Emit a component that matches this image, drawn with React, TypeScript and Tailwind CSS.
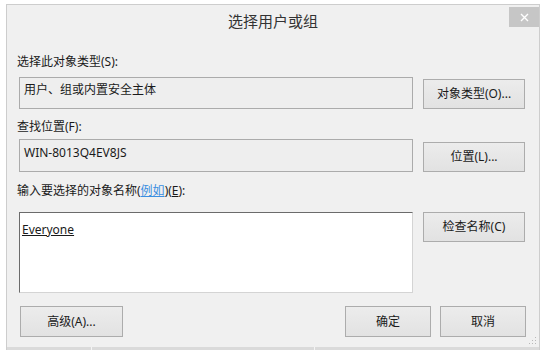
import React from "react";

const font = "font-['Noto_Sans','Noto_Sans_CJK_SC',sans-serif]";

function Btn({ children, w, h, cls = "" }: { children: React.ReactNode; w: string; h: string; cls?: string }) {
  return (
    <div
      className={`${w} ${h} ${cls} flex items-center justify-center border border-[#acacac] bg-gradient-to-b from-[#ececec] to-[#e2e2e2] text-[12px] leading-[16px] text-[#1a1a1a]`}
    >
      {children}
    </div>
  );
}

export default function App() {
  return (
    <div className={`w-[544px] h-[350px] bg-white pl-[6px] pt-[4px] overflow-hidden ${font}`}>
      <div className="relative w-[534px] h-[346px] border border-b-0 border-[#cdcdcd] bg-[#f0f0f0] flex flex-col">
        {/* Title bar */}
        <div className="relative h-[30px] flex items-center justify-center">
          <span className="text-[15px] leading-[20px] text-[#333] pt-[1px]">选择用户或组</span>
          <div className="absolute right-0 top-[2px] w-[30px] h-[20px] bg-[#c6c6c6] flex items-center justify-center">
            <svg width="9" height="9" viewBox="0 0 9 9">
              <path d="M1 1L8 8M8 1L1 8" stroke="#fff" strokeWidth="1.4" />
            </svg>
          </div>
        </div>

        {/* Row 1 */}
        <div className="mt-[19px] pl-[10px] text-[12px] leading-[16px] text-[#1a1a1a]">选择此对象类型(S):</div>
        <div className="mt-[7px] pl-[12px] flex gap-[10px] items-end">
          <div className="w-[394px] h-[32px] border border-[#ababab] bg-[#eeeeee] pl-[4px] pt-[4px] text-[12px] leading-[16px] text-[#1a1a1a]">
            用户、组或内置安全主体
          </div>
          <Btn w="w-[102px]" h="h-[30px]">对象类型(O)...</Btn>
        </div>

        {/* Row 2 */}
        <div className="mt-[10px] pl-[10px] text-[12px] leading-[16px] text-[#1a1a1a]">查找位置(F):</div>
        <div className="mt-[4px] pl-[12px] flex gap-[10px] items-end">
          <div className="w-[394px] h-[33px] border border-[#ababab] bg-[#eeeeee] pl-[4px] pt-[5px] text-[12px] leading-[16px] text-[#1a1a1a]">
            WIN-8013Q4EV8JS
          </div>
          <Btn w="w-[102px]" h="h-[30px]">位置(L)...</Btn>
        </div>

        {/* Row 3 */}
        <div className="mt-[11px] pl-[10px] text-[12px] leading-[16px] text-[#1a1a1a]">
          输入要选择的对象名称(<span className="text-[#3b8ee0] underline">例如</span>)(<span className="underline">E</span>):
        </div>
        <div className="mt-[13px] pl-[12px] flex gap-[10px] items-start">
          <div className="w-[394px] h-[81px] border border-[#d4d4d4] border-t-[#6b6b6b] border-l-[#6b6b6b] bg-white pl-[2px] pt-[9px] text-[12px] leading-[16px] text-[#1a1a1a]">
            <span className="underline">Everyone</span>
          </div>
          <Btn w="w-[102px]" h="h-[30px]">检查名称(C)</Btn>
        </div>

        {/* Bottom buttons */}
        <div className="mt-[13px] pl-[13px] flex items-start">
          <Btn w="w-[103px]" h="h-[31px]">高级(A)...</Btn>
          <div className="flex-1" />
          <div className="flex gap-[9px] pr-[13px]">
            <Btn w="w-[86px]" h="h-[31px]">确定</Btn>
            <Btn w="w-[86px]" h="h-[31px]">取消</Btn>
          </div>
        </div>

        <div className="flex-1" />
        <div className="h-[3px] bg-[#dadada] flex">
          <div className="w-[84px]" />
          <div className="w-[1px] bg-[#f4f4f4]" />
          <div className="w-[222px]" />
          <div className="w-[1px] bg-[#f4f4f4]" />
        </div>

        {/* Resize grip */}
        <svg className="absolute right-[2px] bottom-[5px]" width="9" height="9" viewBox="0 0 9 9">
          <rect x="7" y="1" width="1" height="1" fill="#b8b8b8" />
          <rect x="4" y="4" width="1" height="1" fill="#b8b8b8" />
          <rect x="7" y="4" width="1" height="1" fill="#b8b8b8" />
          <rect x="1" y="7" width="1" height="1" fill="#b8b8b8" />
          <rect x="4" y="7" width="1" height="1" fill="#b8b8b8" />
          <rect x="7" y="7" width="1" height="1" fill="#b8b8b8" />
        </svg>
      </div>
    </div>
  );
}
